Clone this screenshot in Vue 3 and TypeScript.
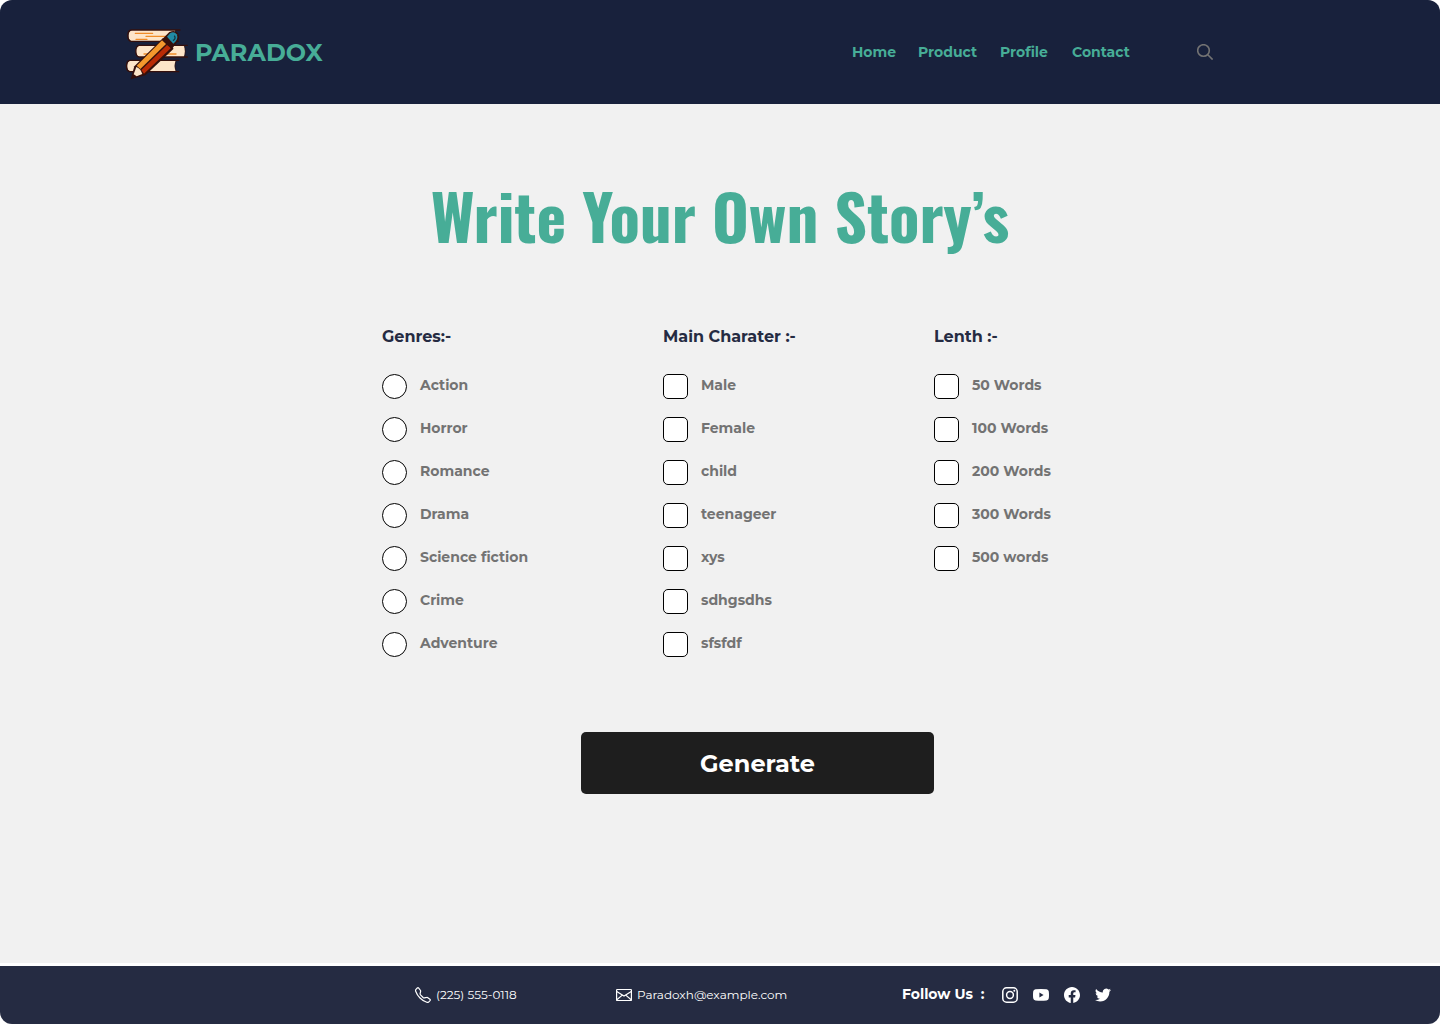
<script setup lang="ts">
import { ref } from 'vue'

interface Group {
  title: string
  name: string
  type: 'radio' | 'checkbox'
  options: string[]
}

const links: string[] = ['Home', 'Product', 'Profile', 'Contact']

const groups: Group[] = [
  {
    title: 'Genres:-',
    name: 'genre',
    type: 'radio',
    options: ['Action', 'Horror', 'Romance', 'Drama', 'Science fiction', 'Crime', 'Adventure'],
  },
  {
    title: 'Main Charater :-',
    name: 'character',
    type: 'checkbox',
    options: ['Male', 'Female', 'child', 'teenageer', 'xys', 'sdhgsdhs', 'sfsfdf'],
  },
  {
    title: 'Lenth :-',
    name: 'length',
    type: 'checkbox',
    options: ['50 Words', '100 Words', '200 Words', '300 Words', '500 words'],
  },
]

const generating = ref<boolean>(false)
function generate(): void {
  generating.value = true
}
</script>

<template>
  <div class="page">
    <header class="header">
      <a class="brand" href="#">
        <svg class="logo" viewBox="0 0 222 186" aria-hidden="true">
          <g fill="#fde5c9">
            <path d="M166 27H36c-14 2-14 32 0 34h130c-5-10-5-24 0-34z" />
            <path d="M192 73H58c-14 2-14 33 0 35h134c4-10 4-25 0-35z" />
            <path d="M168 118H32c-14 2-14 32 0 34h136c-5-10-5-24 0-34z" />
          </g>
          <g fill="none" stroke="#35100c" stroke-width="4" stroke-linecap="round" stroke-linejoin="round">
            <path d="M180 27H34c-14 2-14 32 0 34h141" />
            <path d="M202 73H58c-14 2-14 33 0 35h144" />
            <path d="M176 118H30c-14 2-14 32 0 34h146" />
            <path stroke-width="2" d="M193 75c4 10 4 22 0 32M168 120c-4 10-4 20 0 30" />
          </g>
          <g stroke="#f08c28" stroke-width="4" stroke-linecap="round">
            <path d="M46 37h52M78 46h60M48 55h33M72 99h22M132 99h36" />
          </g>
          <path fill="#35100c" d="M32 175l11-39 86-85 32 32-85 80z" />
          <path fill="#fde5c9" d="M41 160l8-22q13 4 18 21l-17 7z" />
          <path fill="#f3982d" d="M50 134l76-76 12 11-77 75z" />
          <path fill="#b92b06" d="M64 147l77-75 12 9-81 77z" />
          <path fill="#35100c" d="M128 53l20-20q18-8 27 5 6 14-5 27l-15 20z" />
          <path fill="#218ba5" d="M141 47l9-10q12-7 20 3 6 12-4 22l-6 6z" />
          <path fill="none" stroke="#123947" stroke-width="4" d="M163 44q6 9-4 15" />
        </svg>
        <span>PARADOX</span>
      </a>
      <nav class="nav" aria-label="Main">
        <a v-for="link in links" :key="link" href="#">{{ link }}</a>
      </nav>
      <button class="search" type="button" aria-label="Search">
        <svg viewBox="0 0 16 16" fill="none" stroke="#737373" stroke-width="1.600">
          <circle cx="6.5" cy="6.5" r="5.8" />
          <path d="M10.8 10.8l4.800 4.800" />
        </svg>
      </button>
    </header>

    <main class="main">
      <h1>Write Your Own Story’s</h1>
      <form class="form" @submit.prevent="generate">
        <fieldset v-for="group in groups" :key="group.name">
          <legend>{{ group.title }}</legend>
          <div class="options">
            <label v-for="option in group.options" :key="option">
              <input :type="group.type" :name="group.name" :value="option" />
              <span>{{ option }}</span>
            </label>
          </div>
        </fieldset>
        <button class="generate" type="submit">Generate</button>
      </form>
    </main>

    <footer class="footer">
      <div class="contact">
        <a href="tel:2255550118">
          <svg viewBox="0 0 16 16" fill="none" stroke="#fff" stroke-width="1.200">
            <path d="M3.7 1.1a1 1 0 0 0-1.4-.1L1.2 2.1C.6 2.7.4 3.500.7 4.200a18 18 0 0 0 4.300 6.800 18 18 0 0 0 6.800 4.300c.7.300 1.500.1 2.100-.5l1.100-1.100a1 1 0 0 0-.1-1.400l-2.400-1.800a1 1 0 0 0-.8-.1l-2.200.5a1.600 1.600 0 0 1-1.400-.4L5.500 7.900a1.600 1.600 0 0 1-.4-1.400l.5-2.200a1 1 0 0 0-.1-.8z" />
          </svg>
          <span>(225) 555-0118</span>
        </a>
        <a href="mailto:Paradoxh@example.com">
          <svg viewBox="0 0 16 16" fill="none" stroke="#fff" stroke-width="1.200">
            <rect x=".6" y="2.500" width="14.800" height="11" rx=".6" />
            <path d="M.7 4.500L8 9l7.300-4.500M.8 12.800l5.500-4.700M15.200 12.800L9.700 8.100" />
          </svg>
          <span>Paradoxh@example.com</span>
        </a>
        <div class="follow">
          <strong>Follow Us&nbsp; :</strong>
          <div class="social">
            <a href="#" aria-label="Instagram">
              <svg viewBox="0 0 16 16" fill="none" stroke="#fff" stroke-width="1.5">
                <rect x=".8" y=".8" width="14.400" height="14.400" rx="3.800" />
                <circle cx="8" cy="8" r="3.400" />
                <circle cx="12.300" cy="3.700" r="1" fill="#fff" stroke="none" />
              </svg>
            </a>
            <a href="#" aria-label="YouTube">
              <svg viewBox="0 0 16 16" fill="#fff">
                <path fill-rule="evenodd" d="M2.500 2.300Q8 1.700 13.500 2.300 15.500 2.500 15.800 4.500 16.200 8 15.800 11.200 15.500 13.200 13.500 13.400 8 14 2.500 13.400.5 13.200.2 11.200-.2 8 .2 4.500.5 2.500 2.500 2.300ZM6.400 5.400v5L10.600 7.900Z" />
              </svg>
            </a>
            <a href="#" aria-label="Facebook">
              <svg viewBox="0 0 16 16" fill="#fff">
                <path d="M16 8.049c0-4.446-3.582-8.050-8-8.050C3.580 0-.002 3.603-.002 8.050c0 4.017 2.926 7.347 6.750 7.951v-5.625h-2.030V8.050H6.750V6.275c0-2.017 1.195-3.131 3.022-3.131.876 0 1.791.157 1.791.157v1.980h-1.009c-.993 0-1.303.621-1.303 1.258v1.510h2.218l-.354 2.326H9.250V16c3.824-.604 6.750-3.934 6.750-7.951z" />
              </svg>
            </a>
            <a href="#" aria-label="Twitter">
              <svg viewBox="0 0 16 16" fill="#fff">
                <path d="M5.026 14.500c6.038 0 9.341-5.003 9.341-9.334 0-.14 0-.282-.006-.422A6.685 6.685 0 0 0 16 3.042a6.658 6.658 0 0 1-1.889.518 3.301 3.301 0 0 0 1.447-1.817 6.533 6.533 0 0 1-2.087.793A3.286 3.286 0 0 0 7.875 5.530a9.325 9.325 0 0 1-6.767-3.429 3.289 3.289 0 0 0 1.018 4.382A3.323 3.323 0 0 1 .64 6.075v.045a3.288 3.288 0 0 0 2.632 3.218 3.203 3.203 0 0 1-.865.115 3.230 3.230 0 0 1-.614-.057 3.283 3.283 0 0 0 3.067 2.277A6.588 6.588 0 0 1 .78 13.080a6.320 6.320 0 0 1-.78-.045A9.344 9.344 0 0 0 5.026 14.500z" />
              </svg>
            </a>
          </div>
        </div>
      </div>
    </footer>
  </div>
</template>

<style>
body {
  margin: 0;
  background: #fff;
}
</style>

<style scoped>
.page {
  display: flex;
  flex-direction: column;
  min-height: 100vh;
  border-radius: 12px;
  overflow: hidden;
  background: #f1f1f1;
  color: #252b42;
  font-family: Montserrat, Inter, sans-serif;
  font-size: 14px;
  line-height: 24px;
}

a {
  color: inherit;
  text-decoration: none;
}

svg {
  display: block;
  width: 16px;
  height: 16px;
}

.header {
  display: flex;
  align-items: center;
  height: 104px;
  padding: 0 227px 0 120px;
  background: #18213c;
  color: #47ad97;
  font-weight: 700;
}

.brand {
  display: flex;
  align-items: center;
  gap: 1px;
  margin-right: auto;
  font-size: 24px;
  line-height: 32px;
}

.brand span {
  padding-top: 2px;
}

.logo {
  width: 74px;
  height: 62px;
}

.nav {
  display: grid;
  grid-template-columns: 66px 82px 72px 60px;
  margin-right: 65px;
}

.search {
  padding: 0;
  border: 0;
  background: none;
}

.main {
  flex: 1;
  display: flex;
  flex-direction: column;
  align-items: center;
  padding: 71px 24px 168px;
}

h1 {
  margin: 0;
  color: #47ad97;
  font-family: Oswald, "Liberation Sans Narrow", "Arial Narrow", sans-serif;
  font-size: 63px;
  font-weight: 700;
  line-height: 80px;
}

.form {
  display: grid;
  grid-template-columns: 281px 271px 124px;
  margin-top: 70px;
}

fieldset {
  min-width: 0;
  margin: 0;
  padding: 0;
  border: 0;
}

legend {
  padding: 0;
  font-size: 16px;
  font-weight: 700;
}

.options {
  display: grid;
  gap: 18px;
  padding-top: 25px;
}

label {
  display: flex;
  gap: 13px;
  height: 25px;
  color: #737373;
  font-weight: 700;
  line-height: 22px;
  white-space: nowrap;
}

input {
  appearance: none;
  width: 25px;
  height: 25px;
  margin: 0;
  border: 1px solid #000;
  border-radius: 5px;
  background: #fff;
}

input[type='radio'] {
  border-radius: 50%;
}

input:checked {
  background: #47ad97;
}

.generate {
  grid-column: 1 / 3;
  justify-self: end;
  width: 353px;
  height: 62px;
  margin-top: 75px;
  padding: 0;
  border: 0;
  border-radius: 5px;
  background: #1e1e1e;
  color: #fff;
  font-family: inherit;
  font-size: 24px;
  font-weight: 700;
}

.footer {
  display: flex;
  justify-content: center;
  padding-left: 86px;
  border-top: 3px solid #fff;
  background: #252b42;
  color: #fff;
}

.contact {
  display: grid;
  grid-template-columns: 201px 286px 209px;
  align-items: center;
  height: 58px;
}

.contact > a {
  display: flex;
  align-items: center;
  gap: 5px;
  font-size: 12px;
  font-weight: 400;
}

.follow,
.social {
  display: flex;
  align-items: center;
  justify-content: space-between;
}

.follow strong {
  padding-bottom: 2px;
}

.social {
  gap: 15px;
}
</style>
